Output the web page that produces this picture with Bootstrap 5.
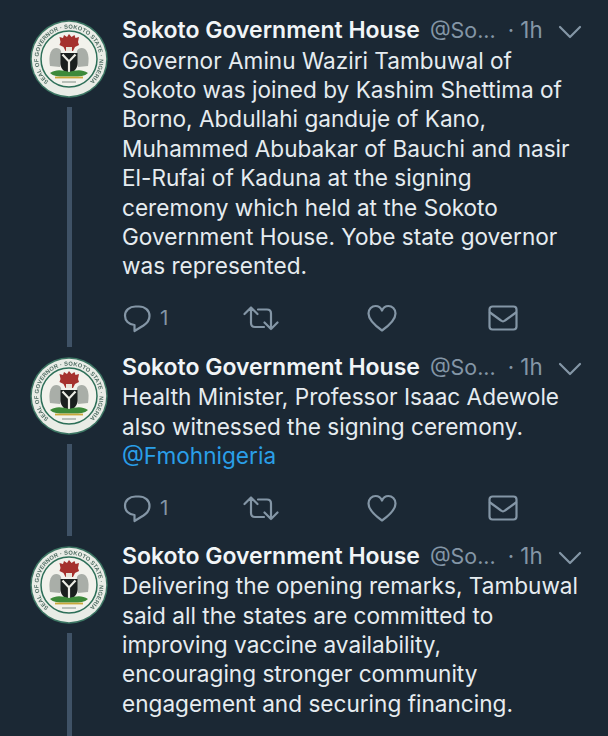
<!DOCTYPE html>
<html lang="en"><head><meta charset="utf-8"><title>Thread</title>
<link href="https://cdn.jsdelivr.net/npm/bootstrap@5.3.0/dist/css/bootstrap.min.css" rel="stylesheet">
<style>
html,body{height:736px;overflow:hidden}
body{background:#1b2834;color:#e6ecf0;font-family:Inter,"Liberation Sans",sans-serif}
.feed{padding-top:15px;height:736px}
.tw{padding-left:30px;padding-right:30px}
.side{width:78px;margin-right:14px;flex:none;padding-top:5px;padding-bottom:5px}
.tw-last .side{padding-bottom:0}
.seal{width:78px;height:78px;display:block;filter:blur(.35px)}
.thread{width:5px;background:#3f5266;margin-top:9px;flex:1 1 auto;margin-left:37px;margin-right:auto}
.body{flex:1 1 auto;min-width:0;padding-bottom:19px}
.tw-mid .body{padding-bottom:18px}
.head{height:30.500px;font-size:23px;line-height:30px;white-space:nowrap;position:relative}
.nm{font-weight:600;color:#f1f5f7}
.hd{color:#8496a6;margin-left:10px;font-size:21.400px}
.tm{color:#8496a6;margin-left:12px;font-size:22.300px}
.chev{position:absolute;left:436px;top:10px;width:24px;height:14px}
.txt{font-size:22.600px;line-height:29.420px;color:#e6ecf0;margin:0;white-space:nowrap}
.txt a{color:#2a9fe8;text-decoration:none}
.acts{height:30px;position:relative;color:#8496a6;margin-top:22px}
.ic{position:absolute;top:0;width:32px;height:30px;fill:none;stroke:#8496a6;stroke-width:2.200;stroke-linecap:round;stroke-linejoin:round}
.ic-r{left:0}.ic-t{left:120px;width:38px}.ic-h{left:244px}.ic-m{left:365px}
.cnt{position:absolute;left:38px;top:1px;font-size:20.500px;line-height:28px}
.sealtxt{font-family:"Liberation Sans",sans-serif;font-size:5.800px;font-weight:700;fill:#4f6d63}
</style></head><body>
<svg width="0" height="0" class="position-absolute">
<defs>
<symbol id="sealg" viewBox="0 0 78 78">
<path id="ringp" d="M19.400 62.400A30.500 30.500 0 1 1 58.600 62.400" fill="none"/>
<circle cx="39" cy="39" r="38.700" fill="#3c7563"/>
<circle cx="39" cy="39" r="37.200" fill="#e9ece6"/>
<circle cx="39" cy="39" r="28" fill="#f2f2ec" stroke="#2d6f58" stroke-width="1.500"/>
<text class="sealtxt"><textPath href="#ringp" textLength="146" startOffset="1">SEAL OF GOVERNOR · SOKOTO STATE · NIGERIA</textPath></text>
<path d="M20 46c-1-7-1-13 3-17 3-2 7-1 8 2l1 8-2 8z" fill="#a9aea8"/>
<path d="M58 46c1-7 1-13-3-17-3-2-7-1-8 2l-1 8 2 8z" fill="#a9aea8"/>
<path d="M39 14l2.500 3 3-2 1 3 3.500-1-1 5 1 3-4 2-2 4H35.500l-2-4-4-2 1-3-1-5 3.500 1 1-3 3 2z" fill="#a5312d"/>
<path d="M36 27h6v4h-6z" fill="#e9e6da"/>
<path d="M30.500 33h17v11c0 5-5 9-8.500 10.500-3.500-1.500-8.500-5.500-8.500-10.500z" fill="#1a1f1e"/>
<path d="M32.500 34.500l6.500 7 6.500-7M39 41.500v11" fill="none" stroke="#ecece4" stroke-width="2.200"/>
<path d="M20 53c6-4 12-3 19-1 7-2 13-3 19 1-4 4-11 3.500-19 3.500S24 57 20 53z" fill="#3d8a3a"/>
<path d="M25 57.500h28" stroke="#c9a83a" stroke-width="1.800"/>
<path d="M32 62h14" stroke="#7f8d84" stroke-width="1"/>
</symbol>
<symbol id="reply" viewBox="0 0 32 30"><path d="M13.500 3.500h3.500c6 0 10.500 4 10.500 9.500 0 4.200-2.500 7.200-6 9.500L12.500 28v-6C6.500 21.500 3 17.500 3 12.800 3 7.500 7.500 3.500 13.500 3.500z"/></symbol>
<symbol id="rt" viewBox="0 0 36 30"><path d="M8 4.500L1.500 11M8 4.500l6.500 6.500M8 4.500V20c0 2.500 1.500 4 4 4h9M28 26l-6.500-6.500M28 26l6.500-6.500M28 26V10.500c0-2.500-1.500-4-4-4h-9"/></symbol>
<symbol id="heart" viewBox="0 0 32 30"><path d="M16 27.500C9 22.500 2.500 17 2.500 10.500 2.500 6 6 3 9.500 3 12.500 3 15 5 16 7.500 17 5 19.500 3 22.500 3 26 3 29.500 6 29.500 10.500 29.500 17 23 22.500 16 27.500z"/></symbol>
<symbol id="mail" viewBox="0 0 32 30"><rect x="2.500" y="3.500" width="27" height="23" rx="3"/><path d="M3 9.500l11 8c1.300 1 2.700 1 4 0l11-8"/></symbol>
<symbol id="chevg" viewBox="0 0 24 14"><path d="M2 2l10 10L22 2" fill="none" stroke="#8496a6" stroke-width="2.200" stroke-linecap="round" stroke-linejoin="round"/></symbol>
</defs></svg>
<main class="feed d-flex flex-column">
<article class="tw d-flex">
<div class="side d-flex flex-column"><svg class="seal"><use href="#sealg"/></svg><div class="thread"></div></div>
<div class="body">
<div class="head"><span class="nm">Sokoto Government House</span><span class="hd">@So...</span><span class="tm">· 1h</span><svg class="chev"><use href="#chevg"/></svg></div>
<p class="txt">Governor Aminu Waziri Tambuwal of<br>Sokoto was joined by Kashim Shettima of<br>Borno, Abdullahi ganduje of Kano,<br>Muhammed Abubakar of Bauchi and nasir<br>El-Rufai of Kaduna at the signing<br>ceremony which held at the Sokoto<br>Government House. Yobe state governor<br>was represented.</p>
<div class="acts"><svg class="ic ic-r"><use href="#reply"/></svg><span class="cnt">1</span><svg class="ic ic-t"><use href="#rt"/></svg><svg class="ic ic-h"><use href="#heart"/></svg><svg class="ic ic-m"><use href="#mail"/></svg></div>
</div></article>
<article class="tw tw-mid d-flex">
<div class="side d-flex flex-column"><svg class="seal"><use href="#sealg"/></svg><div class="thread"></div></div>
<div class="body">
<div class="head"><span class="nm">Sokoto Government House</span><span class="hd">@So...</span><span class="tm">· 1h</span><svg class="chev"><use href="#chevg"/></svg></div>
<p class="txt">Health Minister, Professor Isaac Adewole<br>also witnessed the signing ceremony.<br><a href="#">@Fmohnigeria</a></p>
<div class="acts"><svg class="ic ic-r"><use href="#reply"/></svg><span class="cnt">1</span><svg class="ic ic-t"><use href="#rt"/></svg><svg class="ic ic-h"><use href="#heart"/></svg><svg class="ic ic-m"><use href="#mail"/></svg></div>
</div></article>
<article class="tw tw-last d-flex flex-grow-1">
<div class="side d-flex flex-column"><svg class="seal"><use href="#sealg"/></svg><div class="thread"></div></div>
<div class="body">
<div class="head"><span class="nm">Sokoto Government House</span><span class="hd">@So...</span><span class="tm">· 1h</span><svg class="chev"><use href="#chevg"/></svg></div>
<p class="txt">Delivering the opening remarks, Tambuwal<br>said all the states are committed to<br>improving vaccine availability,<br>encouraging stronger community<br>engagement and securing financing.</p>
</div></article>
</main>
</body></html>
